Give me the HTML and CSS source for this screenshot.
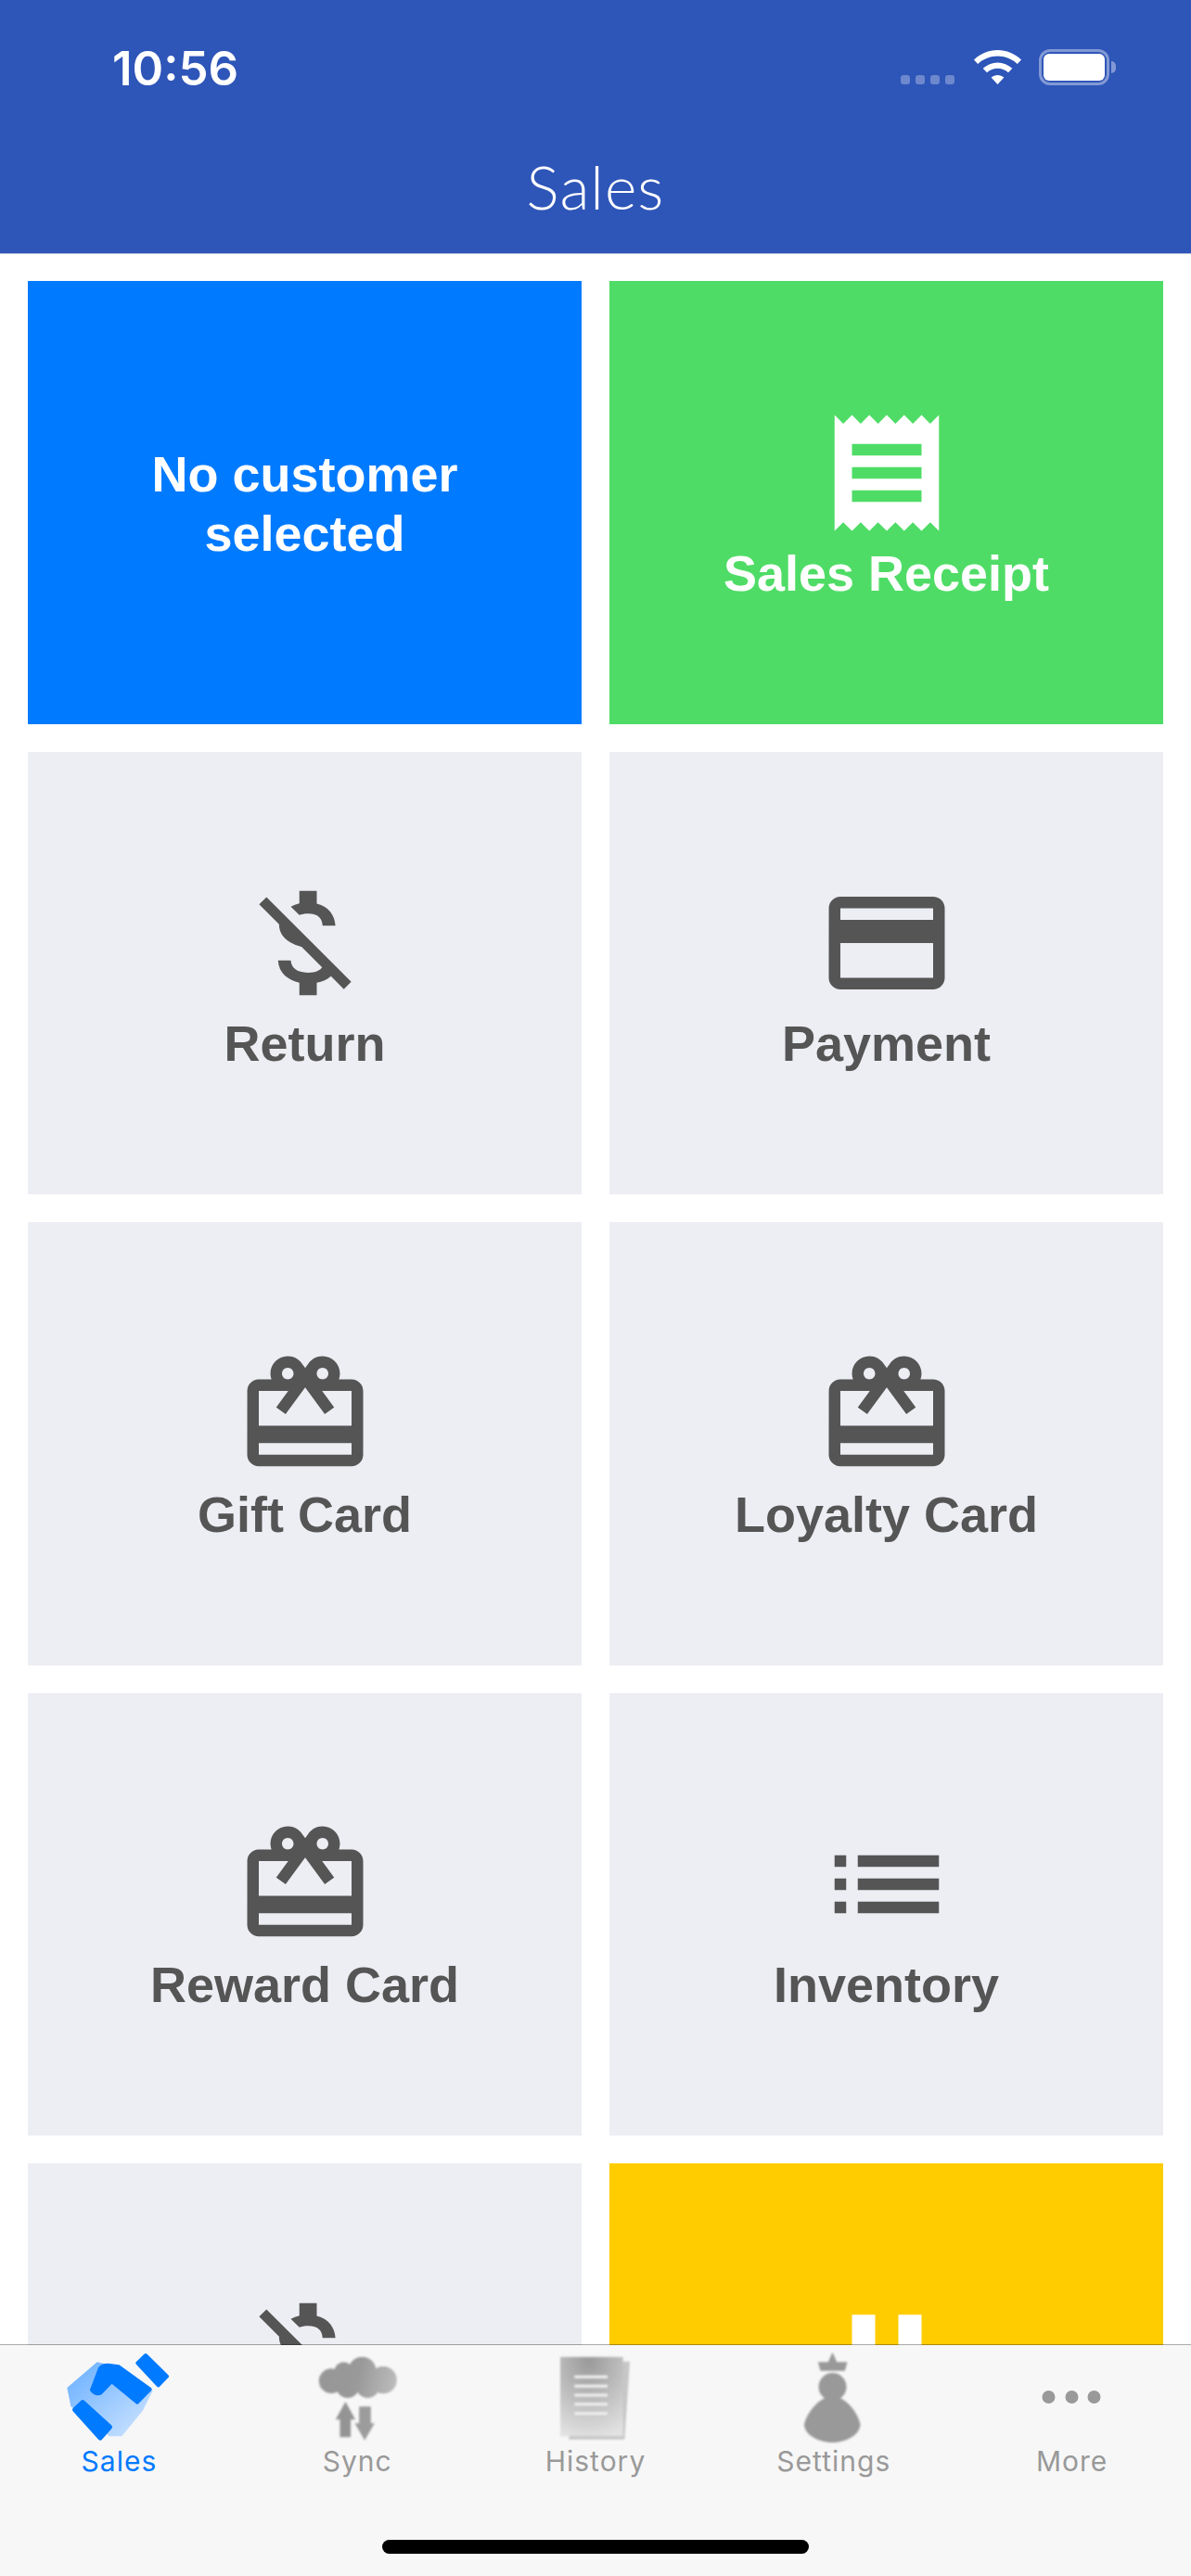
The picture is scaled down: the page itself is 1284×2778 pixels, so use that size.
FILE: index.html
```html
<!DOCTYPE html>
<html lang="en">
<head>
<meta charset="utf-8">
<title>Sales</title>
<link rel="stylesheet" href="styles.css">
</head>
<body>
<div class="app">
  <header class="header">
    <div class="status">
      <span class="time">10:56</span>
      <div class="status-icons">
        <div class="signal"><i></i><i></i><i></i><i></i></div>
        <svg class="wifi" width="51" height="37" viewBox="0 0 51 37"><path fill="#fff" d="M25.5 0C35 0 44 3.800 51 10.400L46.800 15C41 9.500 33.500 6.500 25.500 6.500S10 9.500 4.200 15L0 10.400C7 3.800 16 0 25.500 0zM25.500 13.500C31.500 13.500 37 15.800 41.300 19.800L37 24.300C33.800 21.400 29.800 19.800 25.500 19.800S17.200 21.400 14 24.300L9.700 19.800C14 15.800 19.500 13.500 25.500 13.500zM25.500 27C28 27 30.400 27.900 32.400 29.600L25.500 37L18.600 29.600C20.600 27.900 23 27 25.500 27z"/></svg>
        <div class="battery"><div class="battery-fill"></div></div>
      </div>
    </div>
    <h1 class="title">Sales</h1>
  </header>

  <main class="main">
    <div class="grid">
      <div class="tile tile-blue"><span class="label">No customer selected</span></div>
      <div class="tile tile-green">
        <svg class="icon" viewBox="0 0 24 24"><path d="M18 17H6v-2h12v2zm0-4H6v-2h12v2zm0-4H6V7h12v2zM3 22l1.500-1.500L6 22l1.500-1.500L9 22l1.500-1.500L12 22l1.500-1.500L15 22l1.500-1.500L18 22l1.500-1.500L21 22V2l-1.500 1.500L18 2l-1.500 1.500L15 2l-1.500 1.500L12 2l-1.500 1.500L9 2 7.500 3.500 6 2 4.500 3.500 3 2v20z"/></svg>
        <span class="label">Sales Receipt</span>
      </div>
      <div class="tile">
        <svg class="icon" viewBox="0 0 24 24"><path d="M12.500 6.900c1.780 0 2.440.85 2.500 2.100h2.210c-.07-1.720-1.120-3.300-3.210-3.810V3h-3v2.160c-.53.12-1.030.3-1.480.54l1.470 1.470c.41-.17.91-.27 1.510-.27zM5.330 4.060L4.060 5.330 7.500 8.770c0 2.080 1.560 3.210 3.910 3.910l3.510 3.510c-.34.48-1.050.91-2.420.91-2.060 0-2.870-.92-2.980-2.100h-2.200c.12 2.190 1.760 3.420 3.680 3.830V21h3v-2.150c.96-.18 1.820-.55 2.450-1.120l2.220 2.220 1.270-1.270L5.330 4.060z"/></svg>
        <span class="label">Return</span>
      </div>
      <div class="tile">
        <svg class="icon" viewBox="0 0 24 24"><path d="M20 4H4c-1.110 0-1.990.89-1.990 2L2 18c0 1.110.89 2 2 2h16c1.110 0 2-.89 2-2V6c0-1.110-.89-2-2-2zm0 14H4v-6h16v6zm0-10H4V6h16v2z"/></svg>
        <span class="label">Payment</span>
      </div>
      <div class="tile">
        <svg class="icon" viewBox="0 0 24 24"><path d="M20 6h-2.180c.11-.31.18-.65.18-1 0-1.660-1.340-3-3-3-1.050 0-1.960.54-2.500 1.350l-.5.67-.5-.68C10.960 2.540 10.050 2 9 2 7.340 2 6 3.340 6 5c0 .35.07.69.18 1H4c-1.110 0-1.990.89-1.990 2L2 19c0 1.110.89 2 2 2h16c1.110 0 2-.89 2-2V8c0-1.110-.89-2-2-2zm-5-2c.55 0 1 .45 1 1s-.45 1-1 1-1-.45-1-1 .45-1 1-1zM9 4c.55 0 1 .45 1 1s-.45 1-1 1-1-.45-1-1 .45-1 1-1zm11 15H4v-2h16v2zm0-5H4V8h5.080L7 10.830 8.620 12 11 8.760l1-1.360 1 1.360L15.380 12 17 10.830 14.920 8H20v6z"/></svg>
        <span class="label">Gift Card</span>
      </div>
      <div class="tile">
        <svg class="icon" viewBox="0 0 24 24"><path d="M20 6h-2.180c.11-.31.18-.65.18-1 0-1.660-1.340-3-3-3-1.050 0-1.960.54-2.500 1.350l-.5.67-.5-.68C10.960 2.540 10.050 2 9 2 7.340 2 6 3.340 6 5c0 .35.07.69.18 1H4c-1.110 0-1.990.89-1.990 2L2 19c0 1.110.89 2 2 2h16c1.110 0 2-.89 2-2V8c0-1.110-.89-2-2-2zm-5-2c.55 0 1 .45 1 1s-.45 1-1 1-1-.45-1-1 .45-1 1-1zM9 4c.55 0 1 .45 1 1s-.45 1-1 1-1-.45-1-1 .45-1 1-1zm11 15H4v-2h16v2zm0-5H4V8h5.080L7 10.830 8.620 12 11 8.760l1-1.360 1 1.360L15.380 12 17 10.830 14.920 8H20v6z"/></svg>
        <span class="label">Loyalty Card</span>
      </div>
      <div class="tile">
        <svg class="icon" viewBox="0 0 24 24"><path d="M20 6h-2.180c.11-.31.18-.65.18-1 0-1.660-1.340-3-3-3-1.050 0-1.960.54-2.500 1.350l-.5.67-.5-.68C10.960 2.540 10.050 2 9 2 7.340 2 6 3.340 6 5c0 .35.07.69.18 1H4c-1.110 0-1.990.89-1.990 2L2 19c0 1.110.89 2 2 2h16c1.110 0 2-.89 2-2V8c0-1.110-.89-2-2-2zm-5-2c.55 0 1 .45 1 1s-.45 1-1 1-1-.45-1-1 .45-1 1-1zM9 4c.55 0 1 .45 1 1s-.45 1-1 1-1-.45-1-1 .45-1 1-1zm11 15H4v-2h16v2zm0-5H4V8h5.080L7 10.830 8.620 12 11 8.760l1-1.360 1 1.360L15.380 12 17 10.830 14.920 8H20v6z"/></svg>
        <span class="label">Reward Card</span>
      </div>
      <div class="tile">
        <svg class="icon" viewBox="0 0 24 24"><path d="M3 13h2v-2H3v2zm0 4h2v-2H3v2zm0-8h2V7H3v2zm4 4h14v-2H7v2zm0 4h14v-2H7v2zM7 7v2h14V7H7z"/></svg>
        <span class="label">Inventory</span>
      </div>
      <div class="tile">
        <svg class="icon" viewBox="0 0 24 24"><path d="M12.500 6.900c1.780 0 2.440.85 2.500 2.100h2.210c-.07-1.720-1.120-3.300-3.210-3.810V3h-3v2.160c-.53.12-1.030.3-1.480.54l1.470 1.470c.41-.17.91-.27 1.510-.27zM5.330 4.060L4.060 5.330 7.500 8.770c0 2.080 1.560 3.210 3.910 3.910l3.510 3.510c-.34.48-1.050.91-2.420.91-2.060 0-2.870-.92-2.980-2.100h-2.200c.12 2.190 1.760 3.420 3.680 3.830V21h3v-2.150c.96-.18 1.820-.55 2.450-1.120l2.220 2.220 1.270-1.270L5.330 4.060z"/></svg>
        <span class="label-empty"></span>
      </div>
      <div class="tile tile-yellow">
        <svg class="icon" viewBox="0 0 24 24"><path d="M6 19h4V5H6v14zm8-14v14h4V5h-4z"/></svg>
        <span class="label-empty"></span>
      </div>
    </div>
  </main>

  <nav class="tabbar">
    <div class="tabs">
      <div class="tab tab-active">
        <svg class="tab-icon" viewBox="10 36 450 315">
          <defs>
            <linearGradient id="hand" x1="0" y1="0" x2="1" y2="1">
              <stop offset="0" stop-color="#66aeff"/>
              <stop offset="1" stop-color="#d2e6ff"/>
            </linearGradient>
            <filter id="soft" x="-10%" y="-10%" width="120%" height="120%"><feGaussianBlur stdDeviation="2.500"/></filter>
            <filter id="crisp" x="-10%" y="-10%" width="120%" height="120%"><feGaussianBlur stdDeviation="1.500"/></filter>
          </defs>
          <g filter="url(#crisp)">
            <path fill="url(#hand)" d="M68 165L165 82L240 100L345 175L312 240L245 322L205 322L80 225z"/>
            <path fill="#007aff" stroke="#007aff" stroke-width="12" stroke-linejoin="round" d="M296 85L322 60L391 128L363 157z"/>
            <path fill="#007aff" stroke="#007aff" stroke-width="14" stroke-linejoin="round" d="M92 236L118 211L207 292L175 328z"/>
            <path fill="#007aff" stroke="#007aff" stroke-width="12" stroke-linejoin="round" d="M148 172L174 103Q182 92 200 92L235 97L336 170L295 212L212 144L176 182Q160 188 148 172z"/>
          </g>
        </svg>
        <span class="tab-label">Sales</span>
      </div>
      <div class="tab">
        <svg class="tab-icon" viewBox="780.600 36 450 315">
          <defs>
            <linearGradient id="cloud" gradientUnits="userSpaceOnUse" x1="880" y1="100" x2="1135" y2="160">
              <stop offset="0" stop-color="#979797"/>
              <stop offset="0.5" stop-color="#999"/>
              <stop offset="1" stop-color="#bdbdbd"/>
            </linearGradient>
          </defs>
          <g filter="url(#soft)">
            <g fill="url(#cloud)">
              <circle cx="922" cy="143" r="40"/>
              <circle cx="962" cy="112" r="30"/>
              <circle cx="1022" cy="110" r="45"/>
              <circle cx="1090" cy="140" r="44"/>
              <circle cx="975" cy="160" r="38"/>
              <circle cx="1040" cy="160" r="38"/>
            </g>
            <path fill="#949494" d="M968 210L1000 268H985V325H950V268H936z"/>
            <path fill="#9c9c9c" d="M1012 226H1050V280H1062L1030 335L998 280H1012z"/>
          </g>
        </svg>
        <span class="tab-label">Sync</span>
      </div>
      <div class="tab">
        <svg class="tab-icon" viewBox="21 36 450 315">
          <defs>
            <radialGradient id="page" cx="0.45" cy="0.05" r="1">
              <stop offset="0" stop-color="#9a9a9a"/>
              <stop offset="0.5" stop-color="#bcbcbc"/>
              <stop offset="1" stop-color="#e2e2e2"/>
            </radialGradient>
          </defs>
          <g filter="url(#soft)">
            <path fill="#c6c6c6" d="M160 80H357L340 332H160z"/>
            <path fill="url(#page)" d="M132 65H335V322H132z"/>
            <path stroke="#efefef" stroke-width="9" d="M178 130H285M178 160H285M178 189H285M178 218H285M178 248H285"/>
          </g>
        </svg>
        <span class="tab-label">History</span>
      </div>
      <div class="tab">
        <svg class="tab-icon" viewBox="791.400 36 450 315">
          <g fill="#999" filter="url(#soft)">
            <path d="M1012 50L1026 82L1060 82L1052 110H973L965 82L998 82z"/>
            <circle cx="1012" cy="162" r="45"/>
            <path d="M1012 192C1052 192 1095 245 1102 285C1098 322 1050 342 1012 342C972 342 924 322 920 285C928 245 972 192 1012 192z"/>
          </g>
        </svg>
        <span class="tab-label">Settings</span>
      </div>
      <div class="tab">
        <svg class="tab-icon" viewBox="0 0 150 105">
          <g fill="#999"><circle cx="49.500" cy="53" r="7"/><circle cx="74.500" cy="53" r="7"/><circle cx="98.500" cy="53" r="7"/></g>
        </svg>
        <span class="tab-label">More</span>
      </div>
    </div>
    <div class="home-indicator"></div>
  </nav>
</div>
</body>
</html>
```

FILE: styles.css
```css
* { box-sizing: border-box; }
html, body { margin: 0; padding: 0; }
body { width: 1284px; height: 2778px; overflow: hidden; background: #fff; font-family: "Liberation Sans", Arial, sans-serif; }
.app { display: flex; flex-direction: column; height: 2778px; }

.header { height: 274px; flex: none; background: #2e55b8; border-bottom: 1px solid #b4bcd6; color: #fff; }
.status { height: 165px; display: flex; justify-content: space-between; align-items: flex-start; padding: 43px 88px 0 121px; }
.time { font-family: Inter, sans-serif; font-weight: 600; font-size: 51px; line-height: 62px; letter-spacing: 0; }
.status-icons { display: flex; align-items: flex-start; padding-top: 10px; }
.signal { display: flex; gap: 6px; margin-top: 28px; margin-right: 21px; }
.signal i { display: block; width: 10px; height: 10px; border-radius: 3px; background: rgba(255,255,255,.3); }
.wifi { display: block; margin-top: 1px; margin-right: 19px; }
.battery { position: relative; width: 76px; height: 39px; border: 3.500px solid rgba(255,255,255,.4); border-radius: 12px; padding: 2px; }
.battery::after { content: ""; position: absolute; left: 75px; top: 10px; width: 5px; height: 13px; border-radius: 0 6px 6px 0; background: rgba(255,255,255,.4); }
.battery-fill { height: 100%; background: #fff; border-radius: 6px; }
.title { margin: 0; text-align: center; font-family: Lato, sans-serif; font-weight: 300; font-size: 66px; line-height: 72px; letter-spacing: 1px; }

.main { flex: 1; min-height: 0; overflow: hidden; padding: 29px 30px 0; }
.grid { display: grid; grid-template-columns: 1fr 1fr; grid-auto-rows: 477.500px; gap: 30px; }
.tile { display: flex; flex-direction: column; align-items: center; justify-content: center; padding: 1px 40px 0; background: #edeef3; color: #555; text-align: center; }
.tile-blue { background: #007aff; color: #fff; }
.tile-green { background: #4fdc66; color: #fff; }
.tile-yellow { background: #ffcc00; color: #fff; }
.icon { display: block; width: 150px; height: 150px; flex: none; fill: currentColor; }
.label { padding-top: 1px; font-weight: 700; font-size: 54px; line-height: 64px; }
.label-empty { display: block; height: 65px; }

.tabbar { position: relative; flex: none; height: 250px; margin-top: -1px; display: flex; flex-direction: column; background: #f7f7f7; background-clip: padding-box; border-top: 1px solid rgba(0,0,0,.33); }
.tabs { display: grid; grid-template-columns: repeat(5, 1fr); padding-top: 3px; }
.tab { display: flex; flex-direction: column; align-items: center; color: #999; }
.tab-active { color: #007aff; }
.tab-icon { display: block; width: 150px; height: 105px; }
.tab-label { font-family: Inter, sans-serif; font-size: 30px; line-height: 34px; letter-spacing: 1px; }
.home-indicator { width: 460px; height: 15px; margin: auto auto 24px; border-radius: 8px; background: #000; }
```
